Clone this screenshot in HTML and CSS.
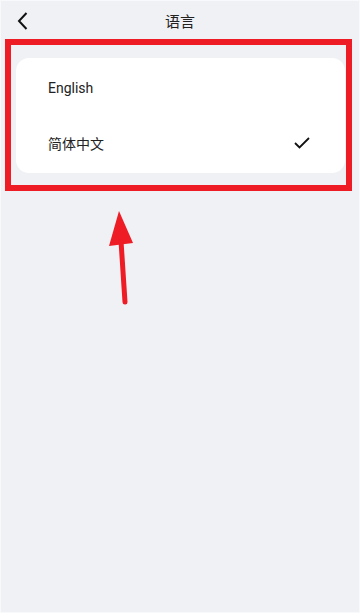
FILE: index.html
```html
<!DOCTYPE html>
<html lang="zh-CN">
<head>
<meta charset="utf-8">
<title>语言</title>
<link rel="stylesheet" href="styles.css">
</head>
<body>
<div class="page">
  <header class="topbar">
    <span class="back">
      <svg width="12" height="20" viewBox="0 0 12 20"><path d="M9.5 2 L2 10 L9.5 18" fill="none" stroke="#111" stroke-width="2"/></svg>
    </span>
    <h1 class="title">语言</h1>
  </header>
  <div class="highlight">
    <ul class="card">
      <li class="row"><span class="label">English</span></li>
      <li class="row"><span class="label">简体中文</span>
        <svg class="check" width="16" height="12" viewBox="0 0 16 12"><path d="M1 6 L5.5 10.5 L15 1" fill="none" stroke="#111" stroke-width="1.8"/></svg>
      </li>
    </ul>
  </div>
  <svg class="arrow" width="40" height="110" viewBox="0 0 40 110">
    <polygon points="19,0 9,35 33,32" fill="#ee1c25"/>
    <line x1="21" y1="30" x2="25" y2="91" stroke="#ee1c25" stroke-width="5" stroke-linecap="round"/>
  </svg>
</div>
</body>
</html>
```

FILE: styles.css
```css
html, body {
  margin: 0;
  padding: 0;
}
body {
  background: #f0f1f5;
  font-family: Roboto, "Noto Sans CJK SC", sans-serif;
  color: #222;
}
.page {
  position: relative;
  height: 611px;
  border: 1px solid #f8f9fb;
  box-sizing: content-box;
  width: 358px;
}
.topbar {
  position: relative;
  height: 38px;
  display: flex;
  align-items: center;
  justify-content: center;
}
.back {
  position: absolute;
  left: 16px;
  top: 10px;
  display: flex;
}
.title {
  margin: 0;
  font-size: 15px;
  font-weight: 400;
  font-family: "Noto Sans CJK SC", sans-serif;
  color: #222;
  line-height: 1;
  margin-top: 1px;
}
.highlight {
  margin-left: 4px;
  width: 329px;
  border: 6px solid #ee1c25;
  padding: 13px 1px 12px 5px;
}
.card {
  list-style: none;
  margin: 0;
  background: #fff;
  border-radius: 13px;
  padding: 2px 0 3px;
}
.row {
  height: 55px;
  display: flex;
  align-items: center;
  justify-content: space-between;
  padding: 0 35px 0 32px;
}
.label {
  font-size: 14px;
  color: #222;
  font-family: Roboto, "Noto Sans CJK SC", sans-serif;
}
.row:last-child .label {
  font-family: "Noto Sans CJK SC", sans-serif;
}
.arrow {
  position: absolute;
  left: 99px;
  top: 210px;
}
```
